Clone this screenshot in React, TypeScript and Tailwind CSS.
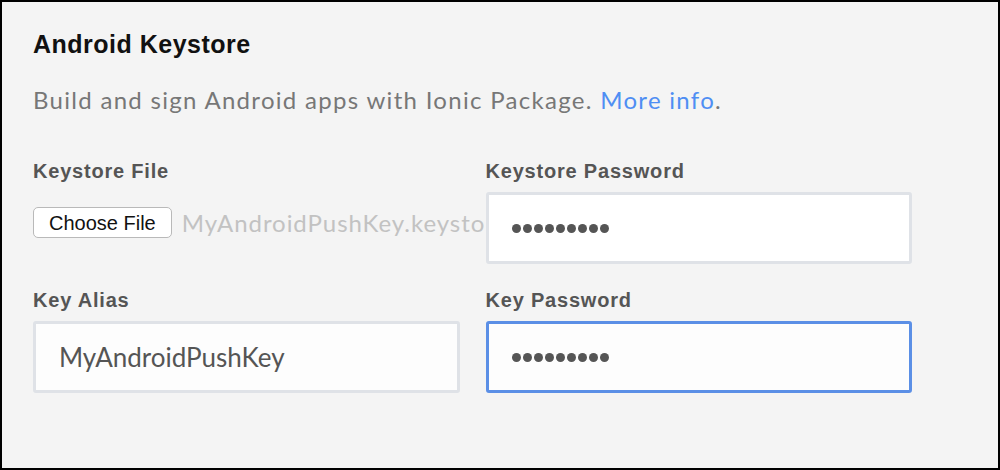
import React from "react";

function Dots() {
  return (
    <div className="flex gap-[2px]">
      {Array.from({ length: 9 }).map((_, i) => (
        <div key={i} className="w-[9px] h-[9px] rounded-full bg-[#555555]" />
      ))}
    </div>
  );
}

export default function App() {
  return (
    <div className="w-[1000px] h-[470px] border-2 border-black bg-[#f4f4f4] pl-[31px] pr-[86px] pt-[30px] overflow-hidden">
      <div className="font-['Liberation_Sans',Arial,sans-serif] font-bold text-[25px] leading-[24px] tracking-[0.5px] text-[#111111]">
        Android Keystore
      </div>
      <div className="mt-[32px] font-['Lato',sans-serif] text-[24px] leading-[24px] tracking-[1.3px] text-[#777777] whitespace-nowrap">
        Build and sign Android apps with Ionic Package.{" "}
        <span className="text-[#4f8ef3]">More info</span>.
      </div>
      <div className="mt-[49px] grid grid-cols-2 gap-x-[26px] gap-y-[26px]">
        <div className="min-w-0">
          <div className="font-['Liberation_Sans',Arial,sans-serif] font-bold text-[20px] leading-[20px] tracking-[0.8px] text-[#555555]">
            Keystore File
          </div>
          <div className="mt-[26px] flex items-center gap-[10px] whitespace-nowrap">
            <button className="h-[31px] px-[15px] rounded-[5px] border border-[#b9b9b9] bg-white font-['Liberation_Sans',Arial,sans-serif] text-[20px] leading-[20px] text-[#111111] shrink-0">
              Choose File
            </button>
            <span className="font-['Lato',sans-serif] text-[24px] leading-[24px] tracking-[0.95px] text-[#c2c2c2]">
              MyAndroidPushKey.keystore
            </span>
          </div>
        </div>
        <div className="relative z-10">
          <div className="font-['Liberation_Sans',Arial,sans-serif] font-bold text-[20px] leading-[20px] tracking-[0.8px] text-[#555555]">
            Keystore Password
          </div>
          <div className="mt-[11px] h-[72px] border-[3px] border-[#dfe2e7] rounded-[3px] bg-white flex items-center pl-[23px]">
            <Dots />
          </div>
        </div>
        <div>
          <div className="font-['Liberation_Sans',Arial,sans-serif] font-bold text-[20px] leading-[20px] tracking-[0.8px] text-[#555555]">
            Key Alias
          </div>
          <div className="mt-[11px] h-[72px] border-[3px] border-[#dfe2e7] rounded-[3px] bg-[#fdfdfd] flex items-center pl-[23px] font-['Lato',sans-serif] text-[26px] text-[#555555]">
            MyAndroidPushKey
          </div>
        </div>
        <div className="relative z-10">
          <div className="font-['Liberation_Sans',Arial,sans-serif] font-bold text-[20px] leading-[20px] tracking-[0.8px] text-[#555555]">
            Key Password
          </div>
          <div className="mt-[11px] h-[72px] border-[3px] border-[#5b8fe6] rounded-[3px] bg-[#fdfdfd] flex items-center pl-[23px]">
            <Dots />
          </div>
        </div>
      </div>
    </div>
  );
}
